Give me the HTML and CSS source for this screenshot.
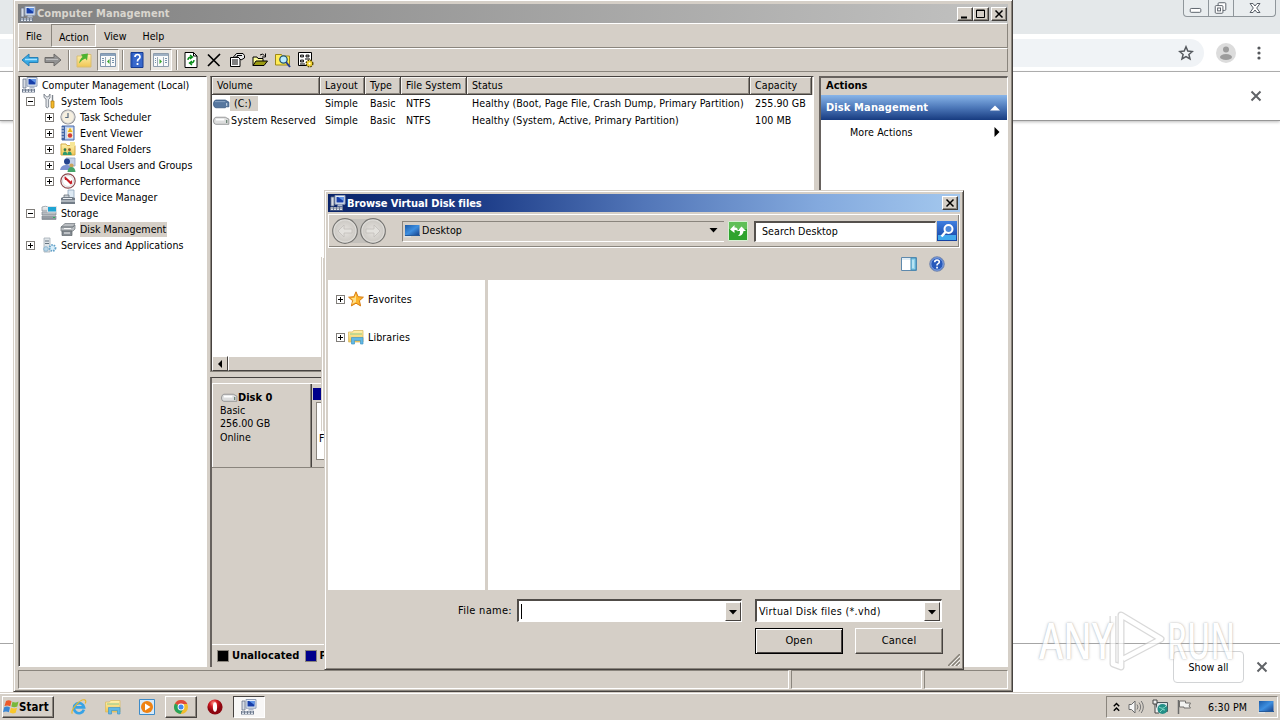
FILE: index.html
```html
<!DOCTYPE html>
<html lang="en">
<head>
<meta charset="utf-8">
<title>Computer Management</title>
<link rel="stylesheet" href="styles.css">
</head>
<body>
<svg class="defs" width="0" height="0">
  <defs>
    <linearGradient id="gb" x1="0" y1="0" x2="0" y2="1"><stop offset="0" stop-color="#3f7fe0"/><stop offset="1" stop-color="#1240a0"/></linearGradient>
    <linearGradient id="gs" x1="0" y1="0" x2="0" y2="1"><stop offset="0" stop-color="#f6f7f8"/><stop offset="1" stop-color="#858c94"/></linearGradient>
    <linearGradient id="gy" x1="0" y1="0" x2="0" y2="1"><stop offset="0" stop-color="#fff3b0"/><stop offset="1" stop-color="#f0c552"/></linearGradient>
    <linearGradient id="gd" x1="0" y1="0" x2="1" y2="1"><stop offset="0" stop-color="#1c5ba8"/><stop offset=".5" stop-color="#3e8fe0"/><stop offset="1" stop-color="#153f88"/></linearGradient>
    <radialGradient id="gn"><stop offset="0" stop-color="#e6e3df"/><stop offset=".8" stop-color="#cfccc7"/><stop offset="1" stop-color="#f0efec"/></radialGradient>
    <radialGradient id="go" cx=".4" cy=".25"><stop offset="0" stop-color="#ff9a90"/><stop offset=".5" stop-color="#d01a20"/><stop offset="1" stop-color="#8d0610"/></radialGradient>
  </defs>
  <symbol id="mgmt" viewBox="0 0 16 16"><path d="M1 2h3v9H1z" fill="#d7dce4" stroke="#67758c" stroke-width=".8"/><path d="M5 .5h10v8.700H5z" fill="#e4ecf7" stroke="#8f9db5"/><path d="M6.500 2h7v5.500h-7z" fill="#173ea8"/><path d="M8 2h5.500v4z" fill="#5f94e8"/><path d="M8 9.500h4l1 2H7z" fill="#aeb9cc"/><path d="M0 12h13v3.500H0z" fill="#6f7b8e"/><path d="M1 13h2m1 0h2m1 0h2m1 0h2M1 14.500h2m1 0h2m1 0h2m1 0h2" stroke="#e8edf5" stroke-width=".9"/></symbol>
  <symbol id="tools" viewBox="0 0 16 16"><path d="M3 1v3.500l2 1.500V14q1.200 1.800 2.600 0V6.500L9 5V1L7.500 3.500 6 4 4.500 3z" fill="#e2e5e9" stroke="#6f7680" stroke-width=".8"/><path d="M11.500 2v6" stroke="#7d848d" stroke-width="1.400"/><path d="M10 8h3v6.500q-1.500 1.500-3 0z" fill="#f4ba2a" stroke="#b47d10" stroke-width=".8"/></symbol>
  <symbol id="clock" viewBox="0 0 16 16"><circle cx="8" cy="8" r="7.600" fill="#8f8f91"/><circle cx="8" cy="8" r="6.200" fill="#f6efdf" stroke="#dcdcdc"/><path d="M8 4v4.500H5.200" fill="none" stroke="#586a80" stroke-width="1.200"/></symbol>
  <symbol id="event" viewBox="0 0 16 16"><path d="M2 1h12v14H2z" fill="#bed2f3" stroke="#4869a8"/><path d="M2 1h3v14H2z" fill="#4264a3"/><path d="M1 3h3M1 6h3M1 9h3M1 12h3" stroke="#e6e9ef"/><path d="M7 3h6v10H7z" fill="#f8edcc"/><path d="M10 2.500 12.500 7H7.800z" fill="#e9b314"/><circle cx="10" cy="10.500" r="2.200" fill="#d13c37"/></symbol>
  <symbol id="shared" viewBox="0 0 16 16"><path d="M1 3h5l1 1.500h8V14H1z" fill="url(#gy)" stroke="#d3ab48"/><circle cx="5" cy="8.700" r="1.400" fill="#357b4c"/><circle cx="9.500" cy="8.700" r="1.400" fill="#8b5a28"/><path d="M2.800 14q0-3.500 2.200-3.500T7.200 14zM7.300 14q0-3.500 2.200-3.500t2.200 3.500z" fill="#2f9a6d"/><path d="M10 1h5v4h-5z" fill="#f7e696"/></symbol>
  <symbol id="users" viewBox="0 0 16 16"><path d="M6 1h9v8H6z" fill="#c3d0e6" stroke="#8fa2c4" stroke-width=".8"/><circle cx="7" cy="4.500" r="3" fill="#23438e"/><path d="M0 13q1-5 6-5t6 5z" fill="#7c92d0"/><circle cx="11.500" cy="8.500" r="2.100" fill="#caa35e"/><path d="M7.500 15q.5-5 4-5t4 5z" fill="#46a46a"/></symbol>
  <symbol id="perf" viewBox="0 0 16 16"><circle cx="8" cy="8" r="7.200" fill="#fff" stroke="#8b4a4e" stroke-width="1.200"/><circle cx="8" cy="8" r="5.500" fill="none" stroke="#d9d9dc"/><path d="M4.500 4.500 11 11M5.500 7V4.500L11.500 10V7.500" fill="none" stroke="#c71f28" stroke-width="1.200"/></symbol>
  <symbol id="device" viewBox="0 0 16 16"><path d="M8 1h6v8H8z" fill="#dde9f3" stroke="#8fa5bb" stroke-width=".8"/><path d="M1 9l2-1h9l3 1v6H1z" fill="#727c87"/><path d="M3 9.500h9M1 12h14" stroke="#e8edf1"/><path d="M4 8V6h5v2" fill="#cbd1d6" stroke="#5b646e" stroke-width=".7"/></symbol>
  <symbol id="storage" viewBox="0 0 16 16"><path d="M1 2q3-1.500 7 0v4H1zM1 7h14v3H1zM1 11h14v3.500H1z" fill="url(#gs)" stroke="#838b92" stroke-width=".7"/><path d="M6.500 1.500h9v5.500h-9z" fill="#1fa4d3" stroke="#dfe4e7"/><path d="M12 12.500h2" stroke="#29b45a"/></symbol>
  <symbol id="diskm" viewBox="0 0 16 16"><path d="M1 6 5 2.500h10L13 6zM1 6h12l2-2v4l-2 2H1z" fill="#b9bdc1" stroke="#6f757b" stroke-width=".7"/><path d="M2 10h10v4.500H2z" fill="#868d94" stroke="#5d6469" stroke-width=".7"/><path d="M4 7.500h7M4 12h6" stroke="#f7f7f7"/></symbol>
  <symbol id="services" viewBox="0 0 16 16"><path d="M3 1h6v14H3z" fill="#dfe5e9" stroke="#a3adb5" stroke-width=".8"/><path d="M4 4h4M4 6.500h4" stroke="#667581"/><circle cx="11.500" cy="11" r="3" fill="#d9eefa" stroke="#65a3c9" stroke-width="1.800" stroke-dasharray="1.500 1"/><circle cx="5" cy="12" r="2.300" fill="#b9d6e8" stroke="#8fb6cf"/></symbol>
  <symbol id="cdrive" viewBox="0 0 18 10"><path d="M3 .8h10l3.800 2.200v5H14l-1 1H3Q.5 8.500.5 5T3 .8z" fill="#57779f" stroke="#36557e" stroke-width=".8"/><path d="M2 2.500h11" stroke="#8ba5c4"/><path d="M14.500 4v3" stroke="#d7e6f3"/></symbol>
  <symbol id="drive" viewBox="0 0 18 10"><path d="M3 1h10l3.800 2v5.500H3Q.5 8.300.5 5T3 1z" fill="#dcdddd" stroke="#8b8c8e" stroke-width=".9"/><path d="M3 3.500h9" stroke="#fff" stroke-width="2"/><path d="M14.500 4v3" stroke="#5d7767" stroke-width="1.200"/></symbol>
  <symbol id="back" viewBox="0 0 18 16"><path d="M1 8 8 2v3.500h9v5H8V14z" fill="#35a8e4" stroke="#2a80b4"/><path d="M4 7.500h12" stroke="#a6e2ff" stroke-width="1.500"/></symbol>
  <symbol id="fwd" viewBox="0 0 18 16"><path d="M17 8 10 2v3.500H1v5h9V14z" fill="#929292" stroke="#6d6b69"/><path d="M2 7.500h12" stroke="#bdbdbd"/></symbol>
  <symbol id="up" viewBox="0 0 16 16"><path d="M1 4h5l1-1.500h8V15H1z" fill="url(#gy)" stroke="#d9bd74"/><path d="M3 11.500Q4 6.500 6.500 5L5 2.500l7-1-1 7-1.700-2Q6 7.500 3 11.500z" fill="#4cb232"/></symbol>
  <symbol id="panelL" viewBox="0 0 16 16"><path d="M.5 1.500h15v13H.5z" fill="#f9fafb" stroke="#7f94ab"/><path d="M1 3h14" stroke="#8ba3bd" stroke-width="2"/><path d="M5.500 5v9M10.500 5v9" stroke="#9ba9b5"/><path d="M2 6.500h2M2 8.500h2M2 10.500h2M12 6.500h2M12 8.500h2M12 10.500h2" stroke="#7894ac"/><path d="M9.500 7v5L7 9.500z" fill="#38a52e"/></symbol>
  <symbol id="panelR" viewBox="0 0 16 16"><path d="M.5 1.500h15v13H.5z" fill="#f9fafb" stroke="#8e9dac"/><path d="M1 3h14" stroke="#9eb0c3" stroke-width="2"/><path d="M4.500 5v9M10.500 5v9" stroke="#9ba9b5"/><path d="M2 6.500h1M2 8.500h1M2 10.500h1M12 6.500h2M12 8.500h2M12 10.500h2" stroke="#7894ac"/><path d="M6.500 7v5L9 9.500z" fill="#38a52e"/></symbol>
  <symbol id="help" viewBox="0 0 16 16"><path d="M2 .5h12v15H2z" fill="#3868cc" stroke="#163b91"/><path d="M3 1v14" stroke="#234fae"/><path d="M6 5q0-2.500 2.500-2.500T11 5q0 1.300-1.300 2T8.500 9.500" fill="none" stroke="#fff" stroke-width="1.700"/><path d="M7.600 11h1.800v2H7.600z" fill="#fff"/></symbol>
  <symbol id="refresh" viewBox="0 0 16 16"><path d="M2 .5h8.500L14 4v11.500H2z" fill="#fff" stroke="#000"/><path d="M10.500.5V4H14" fill="none" stroke="#000"/><path d="M5 8Q5 5 8.500 5M7 3l2.500 2L7 7M11 8q0 3-3.500 3M9 9l-2.500 2L9 13" fill="none" stroke="#078c18" stroke-width="1.400"/></symbol>
  <symbol id="del" viewBox="0 0 16 16"><path d="M2 2.500 13.500 14M14 2 2 14" stroke="#000" stroke-width="1.700"/></symbol>
  <symbol id="props" viewBox="0 0 16 16"><path d="M1.500 5.500h9.500v9H1.500z" fill="#fff" stroke="#000"/><path d="M3 8h6M3 10h6M3 12h6" stroke="#000"/><path d="M4 5.500 7.500 1.500H14l1.500 2V6L12 8 9 5z" fill="#e6e6e6" stroke="#000"/><path d="M8 3.500h5M6.500 5H9" stroke="#000"/></symbol>
  <symbol id="open" viewBox="0 0 16 16"><path d="M1 13.500V5h4l1 1.500h5V9" fill="#ffff9a" stroke="#000"/><path d="M1 13.500 4 9h11.500L12 13.500z" fill="#9c9b13" stroke="#000"/><path d="M8 3q2.500-2 4.500.5M13.500 1.500V5H10" fill="none" stroke="#000"/></symbol>
  <symbol id="find" viewBox="0 0 16 16"><path d="M.5 2.500h6l1 1.500h7v9H.5z" fill="#ffec55" stroke="#9e8714"/><circle cx="8.500" cy="7.500" r="3.700" fill="#b9ecff" stroke="#25566f" stroke-width="1.300"/><path d="m11 10 4 5" stroke="#263d91" stroke-width="2"/></symbol>
  <symbol id="settings" viewBox="0 0 16 16"><path d="M.5.500h13v13H.500z" fill="#fff" stroke="#000"/><path d="M2.500 3h3v2h-3zM2.500 8h3v2h-3zM8 3h3v2H8z" fill="#999" stroke="#000" stroke-width=".8"/><path d="M2 12h5M7 7h5" stroke="#000"/><circle cx="11.500" cy="11.500" r="3" fill="#ffe34b" stroke="#5c4c00" stroke-width="2" stroke-dasharray="1.500 .9"/><circle cx="11.500" cy="11.500" r="2.600" fill="#f3d433"/><circle cx="11.500" cy="11.500" r="1" fill="#fff"/></symbol>
  <symbol id="desk" viewBox="0 0 16 16"><path d="M1 2h14.500v10.500H1z" fill="url(#gd)"/><path d="M1 12.500h15" stroke="#245a9b"/><path d="M0 13.800h7" stroke="#e3ecf3"/></symbol>
  <symbol id="star" viewBox="0 0 16 16"><path d="m8 .8 2.100 4.900 5.300.5-4 3.500 1.200 5.200L8 12.200l-4.600 2.700 1.200-5.200-4-3.500 5.300-.5z" fill="#fdb52b" stroke="#d77c12"/><path d="M8 3v8L4 13l1.500-4L3 7h3.500z" fill="#ffe18c"/></symbol>
  <symbol id="lib" viewBox="0 0 16 16"><path d="M.5 3h4l1-1.500H15V13H.5z" fill="url(#gy)" stroke="#d9bb68" stroke-width=".8"/><path d="M2 5h12" stroke="#8fc98a"/><path d="M3.500 8.500h11.500V15h-2.500v-3.500H6.500V15h-3z" fill="#62b9e5" stroke="#4396c5" stroke-width=".7"/></symbol>
  <symbol id="ie" viewBox="0 0 18 18"><path d="M14.500 12A5.700 5.700 0 1 1 14.700 9.500H5" fill="none" stroke="#37a3e6" stroke-width="3"/><path d="M1.500 16.500C-1 13 10-.5 15.500 1q2 .8.500 4" fill="none" stroke="#e6b72b" stroke-width="1.300"/></symbol>
  <symbol id="wmp" viewBox="0 0 16 16"><path d="M.5.500h15v15H.500z" fill="#d6eafa" stroke="#3d8bc8"/><circle cx="8" cy="8" r="6" fill="#ef8212"/><path d="M6 4.500 11.500 8 6 11.500z" fill="#fff"/></symbol>
  <symbol id="chrome" viewBox="0 0 16 16"><circle cx="8" cy="8" r="7" fill="#f2bd2d"/><path d="M8 8 2 4.400A7 7 0 0 1 14.300 5H8z" fill="#df4a3c"/><path d="M8 8 2 4.400A7 7 0 0 0 7.500 15L10.600 9.500z" fill="#27a35a"/><circle cx="8" cy="8" r="3.400" fill="#fff"/><circle cx="8" cy="8" r="2.500" fill="#4189ed"/></symbol>
  <symbol id="opera" viewBox="0 0 16 16"><circle cx="8" cy="8" r="7.600" fill="url(#go)"/><ellipse cx="8" cy="8" rx="2.100" ry="4.800" fill="#fff"/></symbol>
  <symbol id="winlogo" viewBox="0 0 17 16"><path d="M3 2q3-1.500 5.500.3L7.300 7.200Q4.500 5.800 1.500 7z" fill="#ee5b2b"/><path d="M9.500 2.700q3 1.500 6-.2L14.300 7.500q-3 1.400-6 0z" fill="#78b83a"/><path d="M1.200 8.200q3-1.300 5.800.2L5.800 13.300q-2.800-1.400-5.800 0z" fill="#3b87d4"/><path d="M8 8.700q3 1.400 6 0l-1.300 5q-3 1.500-6-.1z" fill="#f8c72c"/></symbol>
  <symbol id="x" viewBox="0 0 12 12"><path d="m1.500 1.500 9 9m0-9-9 9" stroke="#606367" stroke-width="2"/></symbol>
  <symbol id="dn" viewBox="0 0 8 5"><path d="M0 0h8L4 4.500z" fill="#000"/></symbol>
</svg>

<main class="screen">
  <section class="browser">
    <div class="tabstrip"><div class="winbtns">
      <svg class="wb1" viewBox="0 0 25 16"><rect x="6.500" y="8.500" width="11" height="4" rx="1" fill="#fff" stroke="#596069"/></svg>
      <svg class="wb1" viewBox="0 0 25 16"><rect x="9.500" y="2.500" width="8" height="8" rx="1" fill="#fff" stroke="#596069"/><rect x="6.500" y="5.500" width="8" height="8" rx="1" fill="#fff" stroke="#596069"/><rect x="9" y="8" width="3" height="3" fill="none" stroke="#596069"/></svg>
      <svg class="wb2" viewBox="0 0 41 16"><path d="M16 3.500h3l2 2.500 2-2.500h3L22.700 8l3.300 4.500h-3L21 10l-2 2.500h-3L19.300 8z" fill="#fff" stroke="#596069"/></svg>
    </div></div>
    <div class="omni-row"><div class="omni"><svg class="bstar" viewBox="0 0 16 16"><path d="m8 1.800 1.800 4.300 4.600.4-3.500 3 1.100 4.500L8 11.600 4 14l1.100-4.500-3.500-3 4.600-.4z" fill="none" stroke="#55595e" stroke-width="1.500"/></svg></div>
      <svg class="avatar" viewBox="0 0 20 20"><circle cx="10" cy="10" r="10" fill="#dcdcdc"/><circle cx="10" cy="6.500" r="3" fill="#9c9c9c"/><ellipse cx="10" cy="14" rx="6" ry="3" fill="#9c9c9c"/></svg>
      <svg class="dots" viewBox="0 0 4 14"><circle cx="2" cy="2" r="1.600" fill="#55585c"/><circle cx="2" cy="7" r="1.600" fill="#55585c"/><circle cx="2" cy="12" r="1.600" fill="#55585c"/></svg></div>
    <div class="infobar"><svg class="bx"><use href="#x"/></svg></div>
    <div class="pagearea"></div>
    <div class="shelf"><span class="showall">Show all</span><svg class="bx"><use href="#x"/></svg></div>
  </section>

  <section class="window">
    <div class="titlebar"><svg class="i16"><use href="#mgmt"/></svg><span class="ttl">Computer Management</span>
      <div class="cap"><i class="cb"><svg viewBox="0 0 14 12"><path d="M3 9.500h6" stroke="#000" stroke-width="2"/></svg></i><i class="cb"><svg viewBox="0 0 14 12"><path d="M2.500 2h8v7.500h-8zM2 2.500h9" fill="none" stroke="#000"/></svg></i><i class="cb last"><svg viewBox="0 0 14 12"><path d="m3.500 2.500 7 7m0-7-7 7" stroke="#000" stroke-width="1.500"/></svg></i></div></div>
    <div class="menubar"><span class="mi">File</span><span class="mi on">Action</span><span class="mi">View</span><span class="mi help">Help</span></div>
    <div class="toolbar">
      <svg class="i18"><use href="#back"/></svg><svg class="i18 f"><use href="#fwd"/></svg><i class="sep"></i>
      <svg class="i16 u"><use href="#up"/></svg><span class="tog"><svg class="i16"><use href="#panelL"/></svg></span><i class="sep s2"></i>
      <svg class="i16 h"><use href="#help"/></svg><span class="tog t2"><svg class="i16"><use href="#panelR"/></svg></span><i class="sep s3"></i>
      <div class="tgroup"><svg class="i16"><use href="#refresh"/></svg><svg class="i16"><use href="#del"/></svg><svg class="i16"><use href="#props"/></svg><svg class="i16"><use href="#open"/></svg><svg class="i16"><use href="#find"/></svg><svg class="i16"><use href="#settings"/></svg></div>
    </div>
    <div class="content">
      <div class="tree">
        <div class="tr root"><svg class="i16"><use href="#mgmt"/></svg><span>Computer Management (Local)</span></div>
        <div class="tr"><i class="ex minus"></i><svg class="i16"><use href="#tools"/></svg><span>System Tools</span></div>
        <div class="tr l2"><i class="ex"></i><svg class="i16"><use href="#clock"/></svg><span>Task Scheduler</span></div>
        <div class="tr l2"><i class="ex"></i><svg class="i16"><use href="#event"/></svg><span>Event Viewer</span></div>
        <div class="tr l2"><i class="ex"></i><svg class="i16"><use href="#shared"/></svg><span>Shared Folders</span></div>
        <div class="tr l2"><i class="ex"></i><svg class="i16"><use href="#users"/></svg><span>Local Users and Groups</span></div>
        <div class="tr l2"><i class="ex"></i><svg class="i16"><use href="#perf"/></svg><span>Performance</span></div>
        <div class="tr l2"><i class="ex none"></i><svg class="i16"><use href="#device"/></svg><span>Device Manager</span></div>
        <div class="tr"><i class="ex minus"></i><svg class="i16"><use href="#storage"/></svg><span>Storage</span></div>
        <div class="tr l2"><i class="ex none"></i><svg class="i16"><use href="#diskm"/></svg><span class="sel">Disk Management</span></div>
        <div class="tr"><i class="ex"></i><svg class="i16"><use href="#services"/></svg><span>Services and Applications</span></div>
      </div>
      <div class="center">
        <div class="list">
          <div class="row head"><span>Volume</span><span>Layout</span><span>Type</span><span>File System</span><span>Status</span><span>Capacity</span></div>
          <div class="row"><span class="vol"><svg class="drv"><use href="#cdrive"/></svg><b class="csel">(C:)</b></span><span>Simple</span><span>Basic</span><span>NTFS</span><span>Healthy (Boot, Page File, Crash Dump, Primary Partition)</span><span>255.90 GB</span></div>
          <div class="row"><span class="vol"><svg class="drv"><use href="#drive"/></svg><b class="sysres">System Reserved</b></span><span>Simple</span><span>Basic</span><span>NTFS</span><span>Healthy (System, Active, Primary Partition)</span><span>100 MB</span></div>
          <div class="hscroll"><i class="sbtn"><svg viewBox="0 0 4 8"><path d="M4 0v8L0 4z"/></svg></i><i class="thumb"></i></div>
        </div>
        <div class="graph">
          <div class="disk"><div class="dlabel"><div class="dname"><svg class="drv"><use href="#drive"/></svg>Disk 0</div><div>Basic</div><div>256.00 GB</div><div>Online</div></div><div class="part"><i></i><div>F</div></div></div>
          <div class="legend"><i class="k"></i>Unallocated<i class="k p"></i>Primary partition</div>
        </div>
      </div>
      <div class="actions"><div class="ah">Actions</div><div class="ad"><span>Disk Management</span><svg viewBox="0 0 10 6"><path d="M0 5.500h10L5 .500z" fill="#fff"/></svg></div><div class="am"><span>More Actions</span><svg viewBox="0 0 5 10"><path d="M0 0v10l5-5z"/></svg></div></div>
    </div>
    <div class="status"><i></i><i></i><i></i></div>
  </section>

  <div class="backdlg"></div>
  <section class="dialog">
    <div class="dtitle"><svg class="i16"><use href="#mgmt"/></svg><span>Browse Virtual Disk files</span><i class="cb"><svg viewBox="0 0 14 12"><path d="m3.500 2.500 7 7m0-7-7 7" stroke="#000" stroke-width="1.500"/></svg></i></div>
    <div class="nav">
      <svg class="circs" viewBox="0 0 56 28"><path d="M14 2h28v24H14z" fill="#c3c0bb"/><circle cx="14" cy="14" r="12.300" fill="url(#gn)" stroke="#777673" stroke-width="1.200"/><circle cx="42" cy="14" r="12.300" fill="url(#gn)" stroke="#777673" stroke-width="1.200"/><path d="M7 14l6-6v4h8v4h-8v4zM49 14l-6-6v4h-8v4h8v4z" fill="#e3e1dd" stroke="#c1beba" stroke-width=".8"/></svg>
      <div class="addr"><svg class="i16"><use href="#desk"/></svg><span>Desktop</span><svg class="dn"><use href="#dn"/></svg></div>
      <svg class="go" viewBox="0 0 20 20"><path d="M.5.500h19v19H.500z" fill="#2fa32e" stroke="#d6efd2"/><path d="M1 1h18v7H1z" fill="#5fbf57"/><path d="M2 8.500 6.500 4v2.500q3.500-.5 3.500 4-1-2-3.500-1.500v3zM18 10l-4.500-4.500L9.500 10H12q.5 3-2 5 5 0 5.500-5z" fill="#fff"/></svg>
      <div class="search">Search Desktop</div>
      <svg class="mag" viewBox="0 0 20 20"><path d="M0 0h20v20H0z" fill="url(#gb)"/><path d="M1 14h18v5H1z" fill="#41a9ed"/><circle cx="11.500" cy="8" r="4" fill="#4b86d8" stroke="#fff" stroke-width="2"/><path d="m8.500 11-4 4.500" stroke="#fff" stroke-width="2.500"/></svg>
    </div>
    <div class="dtools"><svg class="i16" viewBox="0 0 16 16"><path d="M.5 1.500h15v13H.5z" fill="#fff" stroke="#5e89ac"/><path d="M1 3h9" stroke="#c3dbea"/><path d="M10 2h5v12h-5z" fill="#8ed0e9" stroke="#3f8bb5"/><path d="M12 4v8" stroke="#e1f7fc"/></svg><svg class="i16" viewBox="0 0 16 16"><circle cx="8" cy="8" r="7.300" fill="#2759bb" stroke="#808fae"/><circle cx="8" cy="8" r="6.200" fill="none" stroke="#a8c2ef" stroke-width=".8"/><path d="M5.700 6.300Q5.700 4 8 4t2.300 2q0 1-1.200 1.600T8 9.500" fill="none" stroke="#fff" stroke-width="1.600"/><path d="M7.200 10.700h1.700v1.700H7.200z" fill="#fff"/></svg></div>
    <div class="panes"><div class="places"><div class="pl"><i class="ex"></i><svg class="i16"><use href="#star"/></svg><span>Favorites</span></div><div class="pl"><i class="ex"></i><svg class="i16"><use href="#lib"/></svg><span>Libraries</span></div></div><div class="files"></div></div>
    <div class="foot">
      <label>File name:</label><div class="combo name"><i class="caret"></i><i class="drop"><svg><use href="#dn"/></svg></i></div><div class="combo type"><span>Virtual Disk files (*.vhd)</span><i class="drop"><svg><use href="#dn"/></svg></i></div>
      <div class="btns"><span class="btn def">Open</span><span class="btn">Cancel</span></div>
      <svg class="grip" viewBox="0 0 12 12"><path d="M0 12 12 0M4 12l8-8M8 12l4-4" stroke="#858077" stroke-width="1.500"/><path d="M2 12 12 2M6 12l6-6M10 12l2-2" stroke="#fff" stroke-width=".7"/></svg>
    </div>
  </section>

  <footer class="taskbar">
    <span class="start"><svg class="i17"><use href="#winlogo"/></svg>Start</span>
    <span class="tb"><svg class="i18"><use href="#ie"/></svg></span><span class="tb"><svg class="i16"><use href="#lib"/></svg></span><span class="tb"><svg class="i16"><use href="#wmp"/></svg></span><span class="tb up"><svg class="i16"><use href="#chrome"/></svg></span><span class="tb"><svg class="i16"><use href="#opera"/></svg></span><span class="tb down"><svg class="i16"><use href="#mgmt"/></svg></span>
    <div class="tray">
      <svg class="chev" viewBox="0 0 7 10"><path d="M.8 4.300 3.500 1.500l2.700 2.800M.8 8.800 3.500 6l2.700 2.800" fill="none" stroke="#000" stroke-width="1.400"/></svg>
      <svg class="i16" viewBox="0 0 16 16"><path d="M1 5.500h2.500L7 2v12l-3.500-3.500H1z" fill="#f7f7f7" stroke="#6b6b6b"/><path d="M9 5.500q2 2.500 0 5M11 3.500q3.300 4.500 0 9M13.200 2q4.300 6 0 12" fill="none" stroke="#777"/></svg>
      <svg class="i16" viewBox="0 0 16 16"><path d="M4.500 3.500h11v9h-11z" fill="#d9e5e8" stroke="#49555a"/><path d="M1 1h4v4H1zM3 5v9h4" fill="#eee" stroke="#444"/><circle cx="10.500" cy="10" r="5" fill="#238f87"/><path d="M7 8q4 3 7-1M8 13q2-4 5-2" stroke="#8adfca" fill="none"/></svg>
      <svg class="i16" viewBox="0 0 16 16"><path d="M2.500 1v14" stroke="#6b6b6b" stroke-width="1.500"/><path d="M3.500 2h6v2h5l-1.500 3 1.500 2H8V8H3.500z" fill="#f3f3f1" stroke="#72716e"/></svg>
      <span class="time">6:30 PM</span><svg class="i16"><use href="#desk"/></svg>
    </div>
  </footer>

  <div class="mark"><span class="any">ANY</span><svg viewBox="0 0 60 64"><path d="M6 8v48l8 3V7l40 24-38 20" fill="none" stroke="#c9c9c9" stroke-width="7" stroke-linejoin="round"/><path d="M6 8v48l8 3V7l40 24-38 20" fill="none" stroke="#fff" stroke-width="4.500" stroke-linejoin="round"/><path d="M14 18v30" stroke="#fff" stroke-width="4"/></svg><span class="run">RUN</span></div>
</main>
</body>
</html>
```
FILE: styles.css
```css
* { box-sizing: border-box; }
body { margin: 0; font-family: "DejaVu Sans Condensed", "DejaVu Sans", sans-serif; font-stretch: condensed; font-size: 10.6px; line-height: 13px; color: #000; overflow: hidden; }
svg { display: block; flex: none; }
i { font-style: normal; display: block; flex: none; }
.defs { position: absolute; }
.screen { position: relative; width: 1280px; height: 720px; overflow: hidden; background: #fff; }
.i16 { width: 16px; height: 16px; }
.i17 { width: 17px; height: 16px; }
.i18 { width: 18px; height: 16px; }

/* browser behind */
.browser { position: absolute; inset: 0 0 27px 0; display: flex; flex-direction: column; background: #fff; }
.tabstrip { height: 34px; background: #e4e8ea; display: flex; justify-content: flex-end; padding-right: 4px; }
.winbtns { display: flex; height: 17px; border: 1px solid #8f969b; border-top: 0; border-radius: 0 0 4px 4px; background: #e9edef; }
.wb1 { width: 25px; height: 16px; border-right: 1px solid #8f969b; }
.wb2 { width: 41px; height: 16px; }
.omni-row { height: 38px; display: flex; align-items: center; border-bottom: 1px solid #a9a9a9; padding-right: 19px; }
.omni { flex: 1; height: 28px; border-radius: 0 14px 14px 0; background: #f0f3f6; display: flex; justify-content: flex-end; align-items: center; padding-right: 10px; margin-right: 12px; }
.bstar { width: 16px; height: 16px; }
.avatar { width: 20px; height: 20px; margin-right: 21px; }
.dots { width: 4px; height: 14px; }
.infobar { height: 49px; border-bottom: 1px solid #979797; box-shadow: 0 1px 3px #bbb; display: flex; justify-content: flex-end; align-items: center; padding-right: 18px; }
.bx { width: 12px; height: 12px; }
.pagearea { flex: 1; }
.shelf { height: 50px; border-top: 1px solid #a6a6a6; display: flex; justify-content: flex-end; align-items: center; padding: 0 12px 3px 0; gap: 12px; }
.showall { width: 71px; height: 32px; border: 1px solid #d2d4d6; border-radius: 4px; display: flex; align-items: center; justify-content: center; background: #fff; }

/* management console */
.window { position: absolute; left: 13px; top: -1px; width: 1000px; height: 693px; background: #d5cfc7; border: 1px solid #d5cfc7; border-right-color: #46423f; border-bottom-color: #46423f; box-shadow: inset 1px 1px #fff, inset -1px -1px #8a857d; padding: 4px 4px 2px 4px; display: flex; flex-direction: column; }
.titlebar { height: 19px; background: linear-gradient(90deg, #808080, #c2c2c1); display: flex; align-items: center; padding: 0 1px 0 2px; }
.ttl { color: #d9d5ce; font-weight: bold; font-size: 11px; margin-left: 1px; letter-spacing: .08px; flex: 1; }
.cap { display: flex; }
.cb { width: 16px; height: 14px; background: #d5cfc7; border: 1px solid #fff; border-right-color: #403d3a; border-bottom-color: #403d3a; box-shadow: inset -1px -1px #8a857d; }
.cb.last { margin-left: 2px; }
.cb svg { width: 14px; height: 12px; }
.menubar { height: 25px; border: 1px solid #fff; border-right-color: #8a857d; border-bottom-color: #8a857d; display: flex; align-items: stretch; padding: 1px 0 0 0; }
.mi { padding: 5px 7px 0; }
.mi.on { padding: 6px 7px 0; border: 1px solid #8a857d; border-right-color: #fff; border-bottom-color: #fff; margin: -1px 0 0 2px; width: 45px; }
.mi.on + .mi { padding-left: 8px; }
.mi.help { padding-left: 9px; }
.toolbar { height: 24px; border: 1px solid #fff; border-right-color: #8a857d; border-bottom-color: #8a857d; display: flex; align-items: center; padding-left: 2px; }
.f { margin-left: 5px; }
.sep { width: 2px; height: 20px; border-left: 1px solid #8a857d; border-right: 1px solid #fff; margin: 0 6px 0 6px; }
.tog { width: 22px; height: 22px; border: 1px solid #8a857d; border-right-color: #fff; border-bottom-color: #fff; background: #ebe8e3; padding: 2px; margin-left: 5px; }
.s2 { margin: 0 5px 0 3px; }
.s3 { margin: 0 5px 0 4px; }
.t2 { margin-left: 5px; }
.tgroup { display: flex; gap: 7px; }
.content { flex: 1; min-height: 0; display: flex; margin-top: 4px; }
.tree { width: 189px; background: #fff; border: 1px solid #8a857d; border-top-color: #46423f; border-right-color: #fff; border-bottom-color: #fff; box-shadow: inset 1px 0 #46423f; padding: 0 0 0 1px; }
.tr { height: 16px; display: flex; align-items: center; padding-left: 6px; white-space: nowrap; }
.tr svg { margin: 0 4px 0 6px; }
.tr.l2 { padding-left: 25px; }
.tr.root { padding-left: 2px; letter-spacing: -.04px; }
.tr.root svg { margin-left: 0; }
.sel { background: #d5cfc7; padding: 1px 1px 1px 0; }
.ex { width: 9px; height: 9px; border: 1px solid #817e7a; background: linear-gradient(#000, #000) center / 5px 1px no-repeat, linear-gradient(#000, #000) center / 1px 5px no-repeat, #fff; }
.ex.minus { background: linear-gradient(#000, #000) center / 5px 1px no-repeat, #fff; }
.ex.none { visibility: hidden; }
.center { width: 604px; margin-left: 3px; display: flex; flex-direction: column; }
.list { height: 296px; background: #fff; border: 1px solid #8a857d; border-top-color: #46423f; border-right-color: #fff; box-shadow: inset 1px 0 #46423f; padding-left: 1px; display: flex; flex-direction: column; overflow: hidden; }
.row { height: 17px; display: grid; grid-template-columns: 108px 45px 36px 66px 283px 62px; align-items: center; white-space: nowrap; letter-spacing: .065px; }
.row > span { padding-left: 5px; }
.head { height: 18px; background: #d5cfc7; }
.head > span { height: 18px; border-right: 1px solid #46423f; border-bottom: 1px solid #46423f; box-shadow: inset 1px 1px #f6f4f0, inset -1px -1px #8a857d; padding-top: 2px; }
.row > .vol { padding-left: 1px; display: flex; align-items: center; }
.vol b { font-weight: normal; }
.sysres { padding-left: 1px; letter-spacing: .14px; }
.drv { width: 17px; height: 10px; }
.csel { background: #d5cfc7; padding: 1px 6px 1px 4px; }
.hscroll { margin-top: auto; height: 15px; display: flex; background: #e9e6e1; }
.sbtn { width: 16px; height: 15px; background: #d5cfc7; border: 1px solid #fff; border-right-color: #46423f; border-bottom-color: #46423f; padding: 3px 5px; }
.sbtn svg { width: 4px; height: 8px; }
.thumb { width: 500px; background: #d5cfc7; border: 1px solid #fff; border-bottom-color: #46423f; }
.graph { flex: 1; margin-top: 5px; background: #d5cfc7; border-top: 1px solid #46423f; border-left: 2px solid #67625e; display: flex; flex-direction: column; justify-content: space-between; }
.disk { display: flex; margin-top: 5px; height: 85px; border-top: 1px solid #fff; border-bottom: 1px solid #8a857d; }
.dlabel { width: 99px; border-left: 1px solid #fff; border-right: 1px solid #8a857d; padding: 7px 0 0 7px; line-height: 13.400px; }
.dname { display: flex; align-items: center; font-weight: bold; font-size: 11px; height: 13px; padding-left: 1px; }
.part { flex: 1; border-left: 1px solid #46423f; padding: 4px 1px; }
.part i { height: 12px; background: #00008b; width: 100%; }
.part div { margin: 2px 0 0 3px; height: 58px; background: #fff; border: 1px solid #8a857d; padding: 29px 0 0 2px; }
.legend { height: 23px; border-top: 1px solid #fff; display: flex; align-items: center; font-weight: bold; font-size: 11px; padding: 0 0 1px 5px; letter-spacing: .1px; }
.k { width: 12px; height: 12px; background: #000; border: 1px solid #8a857d; margin-right: 3px; }
.k.p { background: #00008b; margin-left: 5px; }
.actions { flex: 1; margin-left: 5px; background: #fff; border: 1px solid #8a857d; border-top: 2px solid #67625e; border-left: 2px solid #67625e; border-right-color: #fff; border-bottom-color: #fff; }
.ah { height: 17px; background: #d5cfc7; font-weight: bold; font-size: 11px; padding: 1px 0 0 5px; }
.ad { height: 25px; background: linear-gradient(#88b5e9, #4d78b9 50%, #173b80); color: #fff; font-weight: bold; font-size: 11px; letter-spacing: .12px; display: flex; align-items: center; justify-content: space-between; padding: 0 7px 0 5px; }
.ad svg { width: 10px; height: 6px; }
.am { height: 24px; display: flex; align-items: center; justify-content: space-between; padding: 0 7px 0 29px; letter-spacing: .1px; }
.am svg { width: 6px; height: 10px; }
.status { height: 19px; margin-top: 3px; display: grid; grid-template-columns: 771px 131px 1fr; gap: 2px; }
.status i { border: 1px solid #8a857d; border-right-color: #fff; border-bottom-color: #fff; }

/* file dialog */
.backdlg { position: absolute; left: 321px; top: 257px; width: 10px; height: 174px; background: #d5cfc7; border-left: 1px solid #d5cfc7; box-shadow: inset 1px 1px #fff; }
.dialog { position: absolute; left: 324px; top: 190px; width: 640px; height: 480px; background: #d5cfc7; border: 1px solid #d5cfc7; border-right-color: #46423f; border-bottom-color: #46423f; box-shadow: inset 1px 1px #fff, inset -1px -1px #8a857d; padding: 3px 3px 2px; display: flex; flex-direction: column; }
.dtitle { height: 18px; background: linear-gradient(90deg, #0a246a, #1f3f8a 25%, #5276b8 50%, #84aade 78%, #a4c8ee); color: #fff; font-weight: bold; font-size: 11px; display: flex; align-items: center; padding: 0 2px; }
.dtitle span { flex: 1; margin-left: 1px; letter-spacing: -.08px; }
.nav { height: 34px; margin-top: 2px; border: 1px solid #fff; box-shadow: inset -1px -1px #8a857d; display: flex; align-items: center; padding: 0 1px 0 2px; }
.circs { width: 56px; height: 28px; margin-right: 15px; }
.addr { width: 322px; height: 21px; border: 1px solid #8a857d; border-right: 0; border-bottom-color: #fff; display: flex; align-items: center; padding: 0 6px 1px 1px; }
.addr span { margin-left: 2px; flex: 1; letter-spacing: .1px; }
.dn { width: 9px; height: 5px; }
.go { width: 20px; height: 20px; margin: 0 6px 0 4px; }
.search { width: 182px; height: 21px; background: #fff; border: 2px solid #55514d; border-right: 1px solid #fff; border-bottom: 1px solid #fff; padding: 1px 0 0 6px; line-height: 14px; letter-spacing: .05px; }
.mag { width: 20px; height: 20px; margin-left: 1px; }
.dtools { height: 32px; display: flex; justify-content: flex-end; align-items: center; gap: 12px; padding-right: 15px; }
.panes { height: 310px; display: flex; margin-right: 0; }
.places { width: 157px; background: #fff; padding: 11px 0 0 8px; letter-spacing: .1px; }
.files { flex: 1; margin-left: 3px; background: #fff; }
.pl { display: flex; align-items: center; height: 16px; margin-bottom: 22px; }
.pl svg { margin: 0 4px 0 3px; }
.foot { flex: 1; display: grid; grid-template-columns: 184px 225px 188px; column-gap: 0; grid-template-rows: 23px 27px; row-gap: 6px; padding-top: 9px; position: relative; }
.foot label { text-align: right; align-self: center; font-size: 11px; letter-spacing: .3px; white-space: nowrap; }
.combo { height: 23px; background: #fff; border: 2px solid #504c48; border-right: 1px solid #fff; border-bottom: 1px solid #fff; display: flex; align-items: center; justify-content: space-between; white-space: nowrap; }
.name { margin-left: 5px; width: 225px; }
.type { margin-left: 18px; width: 187px; padding: 0 1px 0 2px; letter-spacing: .33px; }
.caret { width: 1px; height: 15px; background: #000; margin-left: 2px; }
.drop { width: 16px; height: 19px; background: #d5cfc7; border: 1px solid #fff; border-right-color: #46423f; border-bottom-color: #46423f; padding: 7px 3px; }
.drop svg { width: 8px; height: 5px; }
.btns { grid-column: 3; display: flex; gap: 12px; margin-left: 18px; }
.btn { width: 88px; height: 26px; flex: none; border: 1px solid #fff; border-right-color: #46423f; border-bottom-color: #46423f; box-shadow: inset -1px -1px #8a857d; text-align: center; line-height: 24px; font-size: 11px; letter-spacing: .2px; }
.btn.def { border-color: #000; box-shadow: inset 1px 1px #fff, inset -1px -1px #46423f; }
.grip { position: absolute; right: 0; bottom: 1px; width: 12px; height: 12px; }

/* taskbar */
.taskbar { position: absolute; left: 0; bottom: 0; width: 1280px; height: 27px; background: #d5cfc7; border-top: 1px solid #fff; box-shadow: 0 -1px #d5cfc7; display: flex; align-items: center; padding-left: 2px; }
.start { width: 52px; height: 22px; border: 1px solid #fff; border-right-color: #46423f; border-bottom-color: #46423f; box-shadow: inset -1px -1px #8a857d; display: flex; align-items: center; font-weight: bold; font-size: 11.400px; margin-right: 9px; letter-spacing: .1px; }
.start svg { margin-right: -1px; }
.tb { width: 32px; height: 22px; margin-right: 2px; display: flex; align-items: center; justify-content: center; flex: none; }
.tb.up { border: 1px solid #fff; border-right-color: #46423f; border-bottom-color: #46423f; box-shadow: inset -1px -1px #8a857d; }
.tb.down { border: 1px solid #46423f; border-right-color: #fff; border-bottom-color: #fff; background: #f8f7f6; }
.tray { margin-left: auto; margin-right: 2px; width: 172px; height: 22px; border: 1px solid #8a857d; border-right-color: #fff; border-bottom-color: #fff; display: flex; align-items: center; padding-left: 6px; gap: 8px; }
.chev { width: 7px; height: 10px; }
.time { margin: 0 3px 0 8px; white-space: nowrap; letter-spacing: .1px; }

.mark { position: absolute; left: 1039px; top: 607px; width: 196px; height: 66px; display: flex; align-items: center; color: #fff; font: 600 50px/36px "Open Sans", sans-serif; text-shadow: 0 0 3px #999, 0 0 1px #bbb; opacity: .7; }
.mark span { display: block; width: 68px; transform: scaleX(.73); transform-origin: left center; white-space: nowrap; }
.mark svg { width: 60px; height: 66px; }
.mark .run { width: 66px; transform: scaleX(.63); }
```
